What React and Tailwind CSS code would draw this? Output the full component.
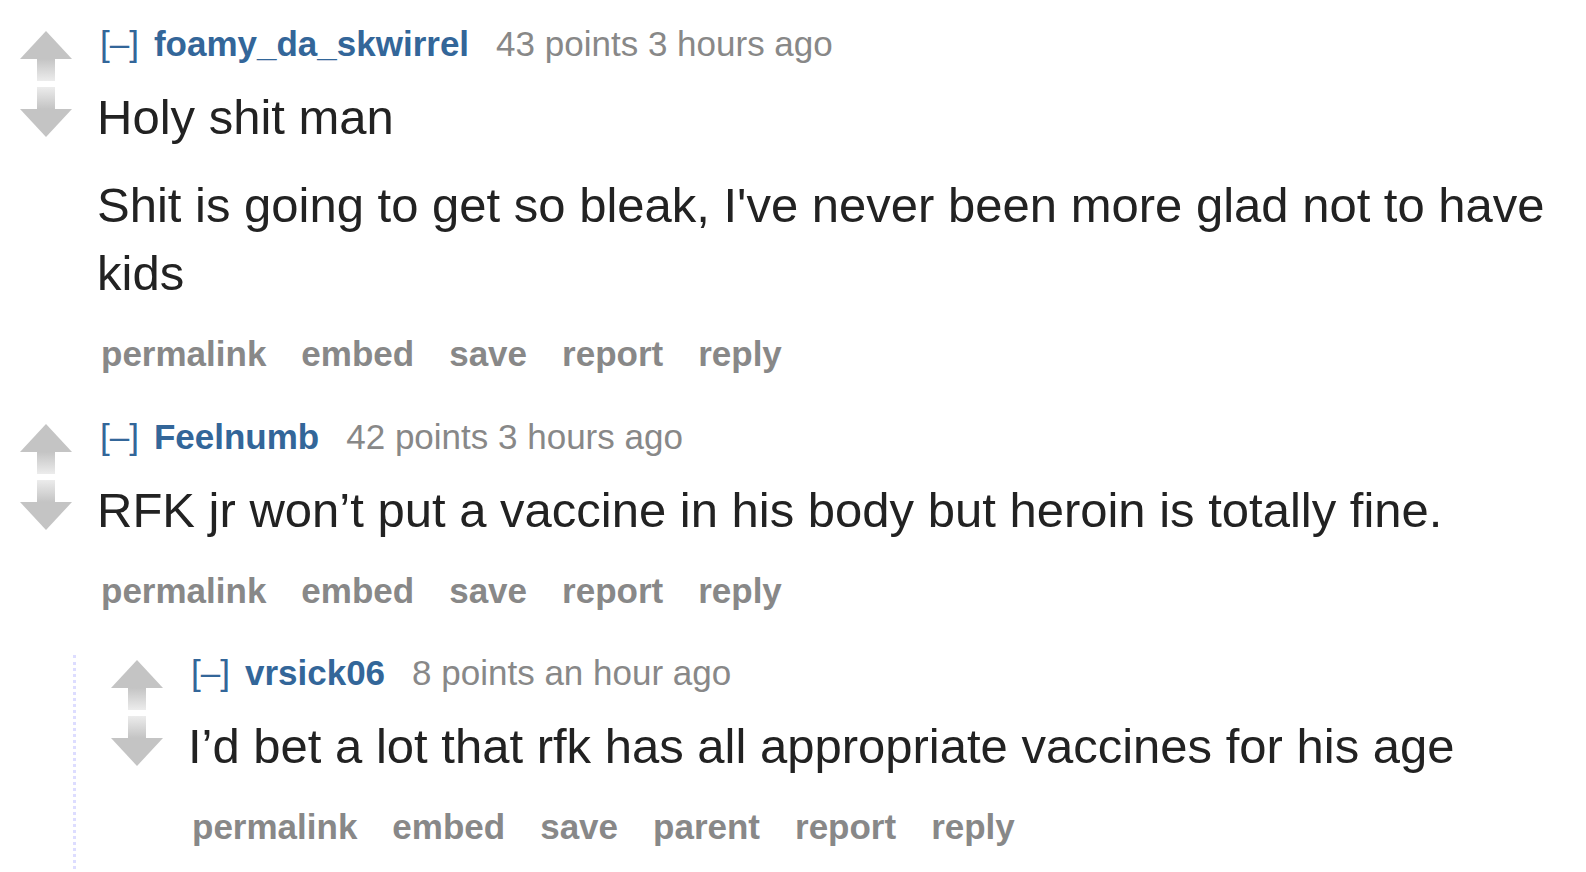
import React from 'react';

// old-reddit style vote arrows, drawn with a fading stem
function UpArrow({ id }) {
  return (
    <svg width="52" height="50" viewBox="0 0 52 50">
      <defs>
        <linearGradient id={id} x1="0" y1="28" x2="0" y2="50" gradientUnits="userSpaceOnUse">
          <stop offset="0" stopColor="#c4c4c4" />
          <stop offset="1" stopColor="#ececec" />
        </linearGradient>
      </defs>
      <polygon points="26,0 52,28 0,28" fill="#c4c4c4" />
      <rect x="17" y="28" width="18" height="22" fill={`url(#${id})`} />
    </svg>
  );
}

function DownArrow({ id }) {
  return (
    <svg width="52" height="50" viewBox="0 0 52 50">
      <defs>
        <linearGradient id={id} x1="0" y1="22" x2="0" y2="0" gradientUnits="userSpaceOnUse">
          <stop offset="0" stopColor="#c4c4c4" />
          <stop offset="1" stopColor="#ececec" />
        </linearGradient>
      </defs>
      <polygon points="0,22 52,22 26,50" fill="#c4c4c4" />
      <rect x="17" y="0" width="18" height="22" fill={`url(#${id})`} />
    </svg>
  );
}

function Comment({ id, author, points, time, paragraphs, buttons }) {
  return (
    <div className="flex">
      {/* vote column */}
      <div className="flex w-[52px] shrink-0 flex-col pt-[5px]">
        <UpArrow id={`${id}-up`} />
        <div className="mt-[6px]">
          <DownArrow id={`${id}-down`} />
        </div>
      </div>

      <div className="ml-[25px] flex-1">
        {/* tagline */}
        <div className="whitespace-nowrap pl-[3px] text-[35px] leading-[36px]">
          <span className="mr-[15px] text-[#369]">[–]</span>
          <span className="mr-[27px] font-bold text-[#369]">{author}</span>
          <span className="text-[#888]">
            {points} points {time}
          </span>
        </div>

        {/* body */}
        <div className="mt-[21px] text-[49px] leading-[68px] text-[#222]">
          {paragraphs.map((p, i) => (
            <p key={i} className={i > 0 ? 'mt-[20px]' : ''}>
              {p}
            </p>
          ))}
        </div>

        {/* buttons */}
        <div className="mt-[29px] flex gap-[35px] pl-[4px] text-[35px] font-bold leading-[36px] text-[#888]">
          {buttons.map((b) => (
            <span key={b}>{b}</span>
          ))}
        </div>
      </div>
    </div>
  );
}

export default function App() {
  const btns = ['permalink', 'embed', 'save', 'report', 'reply'];

  return (
    <div className="min-h-screen overflow-hidden bg-white pl-[20px] pr-[22px] pt-[26px] font-['Liberation_Sans',Arial,sans-serif]">
      <Comment
        id="c1"
        author="foamy_da_skwirrel"
        points="43"
        time="3 hours ago"
        paragraphs={[
          'Holy shit man',
          "Shit is going to get so bleak, I've never been more glad not to have kids",
        ]}
        buttons={btns}
      />

      <div className="mt-[47px]">
        <Comment
          id="c2"
          author="Feelnumb"
          points="42"
          time="3 hours ago"
          paragraphs={['RFK jr won’t put a vaccine in his body but heroin is totally fine.']}
          buttons={btns}
        />
      </div>

      {/* nested reply */}
      <div className="ml-[53px] mt-[46px] border-l-[3px] border-dotted border-[#ddf] pb-[60px] pl-[35px]">
        <Comment
          id="c3"
          author="vrsick06"
          points="8"
          time="an hour ago"
          paragraphs={['I’d bet a lot that rfk has all appropriate vaccines for his age']}
          buttons={['permalink', 'embed', 'save', 'parent', 'report', 'reply']}
        />
      </div>
    </div>
  );
}
